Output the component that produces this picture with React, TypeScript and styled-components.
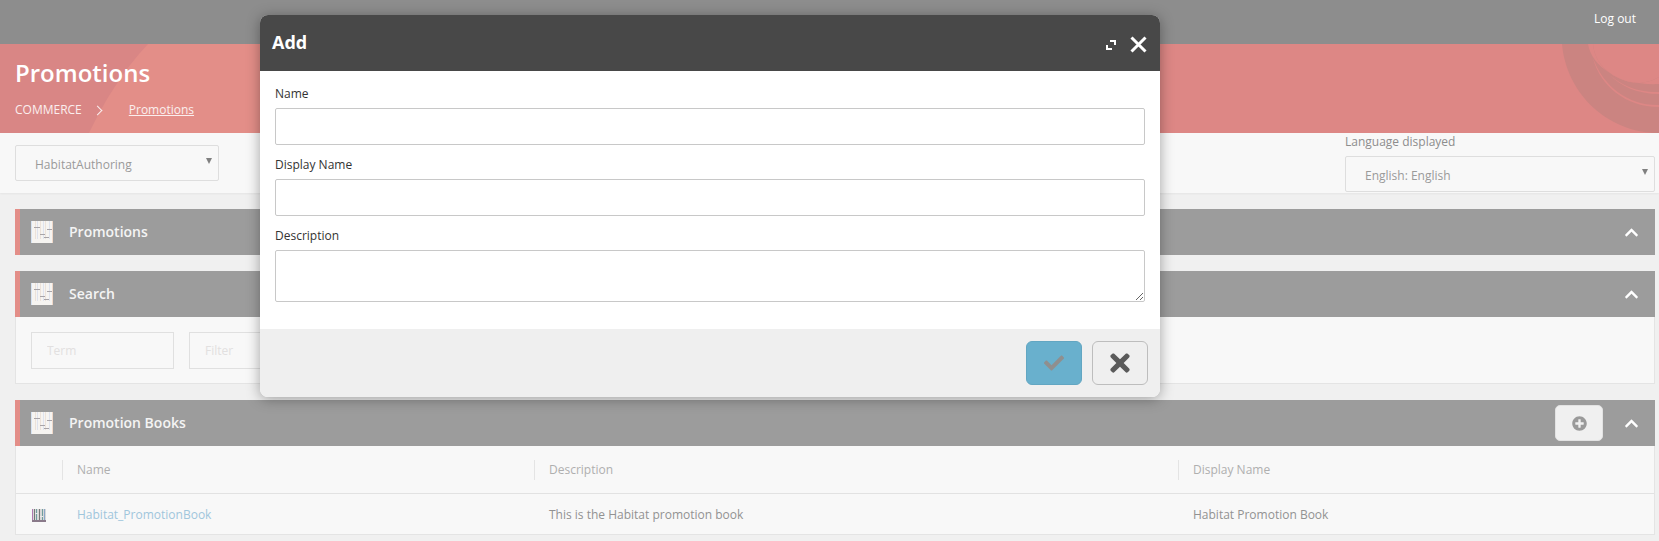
import React from "react";
import styled, { createGlobalStyle } from "styled-components";
import { FaCheck, FaTimes, FaPlusCircle, FaChevronUp } from "react-icons/fa";

const GlobalStyle = createGlobalStyle`
    html, body {
        margin: 0;
        height: 100%;
        overflow: hidden;
        background: #f0f0f0;
        font-family: "Open Sans", "Liberation Sans", sans-serif;
    }
    * {
        box-sizing: border-box;
    }
`;

const MazeIcon = () => (
    <svg width="22" height="22" viewBox="0 0 22 22">
        <rect width="22" height="22" fill="#f6f4f1" />
        <path d="M.5 0v22" stroke="#d5e2f2" />
        <path d="M4.5 0v18M9.5 0v18M14.5 0v18" stroke="#ece2da" />
        <path d="M6.5 0v18M12.5 0v18M18.5 0v18" stroke="#dfe3ee" />
        <path d="M21.5 0v22" stroke="#f0d8c8" />
        <path d="M3 6.5h6M9 13.5h5M13 16.5h5M16 8.5h5" stroke="#a8a4a8" />
    </svg>
);

const SmallMazeIcon = () => (
    <svg width="14" height="13" viewBox="0 0 14 13">
        <rect width="14" height="13" fill="#d8d8d8" />
        <path d="M.5 0v13" stroke="#b07ab0" />
        <path d="M2.5 0v11M7.5 0v11" stroke="#777" />
        <path d="M4.5 0v11M10.5 0v11" stroke="#6f9d9d" />
        <path d="M12.5 0v11" stroke="#8aa6c8" />
        <path d="M0 12h14" stroke="#8a7a8a" strokeWidth="2" />
        <path d="M3 4.5h3M8 7.5h3" stroke="#e8e8e8" />
    </svg>
);

const ExpandIcon = () => (
    <svg width="10" height="10" viewBox="0 0 10 10" fill="none" stroke="#fff" strokeWidth="2">
        <path d="M4 1h5v4M1 5v4h5" />
    </svg>
);

const CloseIcon = () => (
    <svg width="17" height="17" viewBox="0 0 17 17" fill="none" stroke="#fff" strokeWidth="3">
        <path d="M1.5 1.5l14 14M15.5 1.5l-14 14" />
    </svg>
);

const App = () => {
    return (
        <Page>
            <GlobalStyle />
            <TopBar>
                <LogOut>Log out</LogOut>
            </TopBar>
            <Banner>
                <BannerArt width="1659" height="89" viewBox="0 0 1659 89">
                    <path d="M0 0H148C122 28 104 58 89 89H0Z" fill="#d98685" />
                    <path d="M1160 0H1659V89H1160Z" fill="#dd8785" />
                    <path d="M1562 0C1566 48 1606 89 1659 89V0Z" fill="#cb8481" />
                    <path d="M1588 0C1592 24 1622 42 1659 40V33C1652 37 1646 38 1640 39C1630 39 1618 35 1610 29C1600 22 1594 12 1593 0Z" fill="#dd8785" />
                    <path d="M1593 0C1594 12 1600 22 1610 29C1618 35 1630 39 1640 39C1646 38 1652 37 1659 33V0Z" fill="#dd8785" />
                    <path d="M1593 14C1604 44 1630 62 1659 61V63C1626 63 1600 42 1593 14Z" fill="#dd8785" />
                    <path d="M1610 31C1622 42 1640 49 1659 48V50C1638 50 1620 42 1610 31Z" fill="#dd8785" />
                </BannerArt>
                <Title>Promotions</Title>
                <Crumbs>
                    <span>COMMERCE</span>
                    <CrumbArrow />
                    <CrumbLink>Promotions</CrumbLink>
                </Crumbs>
            </Banner>
            <Toolbar>
                <FakeSelect $width={204}>HabitatAuthoring</FakeSelect>
                <LanguageBlock>
                    <LanguageLabel>Language displayed</LanguageLabel>
                    <FakeSelect $width={310}>English: English</FakeSelect>
                </LanguageBlock>
            </Toolbar>
            <Main>
                <section>
                    <PanelHeader>
                        <MazeIcon />
                        <PanelTitle>Promotions</PanelTitle>
                        <Collapse>
                            <FaChevronUp />
                        </Collapse>
                    </PanelHeader>
                </section>
                <section>
                    <PanelHeader>
                        <MazeIcon />
                        <PanelTitle>Search</PanelTitle>
                        <Collapse>
                            <FaChevronUp />
                        </Collapse>
                    </PanelHeader>
                    <SearchBody>
                        <SearchInput placeholder="Term" />
                        <SearchInput placeholder="Filter" />
                    </SearchBody>
                </section>
                <section>
                    <PanelHeader>
                        <MazeIcon />
                        <PanelTitle>Promotion Books</PanelTitle>
                        <AddButton>
                            <FaPlusCircle />
                        </AddButton>
                        <Collapse>
                            <FaChevronUp />
                        </Collapse>
                    </PanelHeader>
                    <TableBody>
                        <HeadRow>
                            <div />
                            <HeadCell>Name</HeadCell>
                            <HeadCell>Description</HeadCell>
                            <HeadCell>Display Name</HeadCell>
                        </HeadRow>
                        <DataRow>
                            <IconCell>
                                <SmallMazeIcon />
                            </IconCell>
                            <BookLink>Habitat_PromotionBook</BookLink>
                            <DataCell>This is the Habitat promotion book</DataCell>
                            <DataCell>Habitat Promotion Book</DataCell>
                        </DataRow>
                    </TableBody>
                </section>
            </Main>
            <Modal>
                <ModalHeader>
                    <ModalTitle>Add</ModalTitle>
                    <ExpandIcon />
                    <CloseIcon />
                </ModalHeader>
                <ModalBody>
                    <FieldLabel>Name</FieldLabel>
                    <TextInput />
                    <FieldLabel>Display Name</FieldLabel>
                    <TextInput />
                    <FieldLabel>Description</FieldLabel>
                    <TextArea />
                </ModalBody>
                <ModalFooter>
                    <ConfirmButton>
                        <FaCheck />
                    </ConfirmButton>
                    <CancelButton>
                        <FaTimes />
                    </CancelButton>
                </ModalFooter>
            </Modal>
        </Page>
    );
};

export default App;

const Page = styled.div`
    position: relative;
    height: 541px;
    overflow: hidden;
`;

const TopBar = styled.header`
    height: 44px;
    background: #8d8d8d;
    display: flex;
    justify-content: flex-end;
    align-items: flex-start;
    padding: 10px 23px 0 0;
`;

const LogOut = styled.a`
    color: #fff;
    font-size: 12px;
    line-height: 18px;
`;

const Banner = styled.div`
    position: relative;
    height: 89px;
    background: #e38e88;
    color: #fff;
    padding: 13px 15px 0;
`;

const BannerArt = styled.svg`
    position: absolute;
    left: 0;
    top: 0;
`;

const Title = styled.h1`
    position: relative;
    margin: 0;
    font-size: 24px;
    font-weight: 600;
    line-height: 32px;
`;

const Crumbs = styled.div`
    position: relative;
    margin-top: 12px;
    display: flex;
    align-items: center;
    font-size: 12px;
    line-height: 18px;
    color: #fbeeee;
`;

const CrumbArrow = styled.i`
    width: 7px;
    height: 7px;
    margin: 0 28px 0 12px;
    border-top: 1px solid #fbeeee;
    border-right: 1px solid #fbeeee;
    transform: rotate(45deg);
`;

const CrumbLink = styled.a`
    text-decoration: underline;
`;

const Toolbar = styled.div`
    height: 60px;
    background: #f8f8f8;
    box-shadow: 0 1px 2px rgba(0, 0, 0, 0.05);
    display: flex;
    justify-content: space-between;
    padding: 12px 4px 0 15px;
`;

const FakeSelect = styled.div<{ $width: number }>`
    position: relative;
    width: ${({ $width }) => $width}px;
    height: 36px;
    border: 1px solid #dedede;
    border-radius: 2px;
    padding: 0 0 0 19px;
    font-size: 12px;
    line-height: 38px;
    color: #9a9a9a;
    &::after {
        content: "";
        position: absolute;
        right: 6px;
        top: 12px;
        border-left: 3px solid transparent;
        border-right: 3px solid transparent;
        border-top: 6px solid #808080;
    }
`;

const LanguageBlock = styled.div`
    margin-top: -12px;
`;

const LanguageLabel = styled.div`
    font-size: 12px;
    line-height: 18px;
    height: 23px;
    color: #8d8d8d;
`;

const Main = styled.main`
    display: flex;
    flex-direction: column;
    gap: 16px;
    padding: 16px 4px 0 15px;
`;

const PanelHeader = styled.div`
    height: 46px;
    display: flex;
    align-items: center;
    background: #9c9c9c;
    border-left: 5px solid #e38e88;
    padding-left: 11px;
    color: #fff;
`;

const PanelTitle = styled.h2`
    flex: 1;
    margin: 0 0 1px 16px;
    font-size: 14px;
    font-weight: 600;
    color: #f4f4f4;
`;

const Collapse = styled.span`
    width: 52px;
    display: flex;
    justify-content: center;
    padding-left: 4px;
    font-size: 15px;
`;

const AddButton = styled.button`
    width: 48px;
    height: 36px;
    display: flex;
    align-items: center;
    justify-content: center;
    border: 1px solid #e2e2e2;
    border-radius: 5px;
    background: #f0f0f0;
    color: #9a9a9a;
    font-size: 15px;
`;

const SearchBody = styled.div`
    height: 67px;
    display: flex;
    gap: 15px;
    padding: 15px 15px 0;
    background: #f8f8f8;
    border: 1px solid #e4e4e4;
    border-top: none;
`;

const SearchInput = styled.input`
    width: 143px;
    height: 37px;
    border: 1px solid #e0e0e0;
    background: transparent;
    padding: 0 15px;
    font-family: inherit;
    font-size: 12px;
    &::placeholder {
        color: #e2e0e0;
    }
`;

const TableBody = styled.div`
    background: #f8f8f8;
    border: 1px solid #e4e4e4;
    border-top: none;
`;

const HeadRow = styled.div`
    height: 48px;
    display: grid;
    grid-template-columns: 46px 472px 644px 1fr;
    align-items: center;
    border-bottom: 1px solid #e2e2e2;
`;

const HeadCell = styled.div`
    height: 20px;
    border-left: 1px solid #e4e4e4;
    padding-left: 14px;
    font-size: 12px;
    line-height: 20px;
    color: #afafaf;
`;

const DataRow = styled.div`
    height: 40px;
    display: grid;
    grid-template-columns: 46px 472px 644px 1fr;
    align-items: center;
`;

const IconCell = styled.div`
    padding: 2px 0 0 16px;
    line-height: 0;
`;

const DataCell = styled.div`
    padding-left: 15px;
    font-size: 12px;
    color: #929292;
`;

const BookLink = styled(DataCell)`
    color: #a0c6dc;
`;

const Modal = styled.div`
    position: absolute;
    left: 260px;
    top: 15px;
    width: 900px;
    border-radius: 8px;
    overflow: hidden;
    background: #fff;
    box-shadow: 0 2px 14px rgba(0, 0, 0, 0.35);
`;

const ModalHeader = styled.div`
    height: 56px;
    background: #484848;
    display: flex;
    align-items: center;
    padding: 3px 13px 0 12px;
    gap: 14px;
`;

const ModalTitle = styled.h3`
    flex: 1;
    margin: 0 0 5px;
    font-size: 18px;
    font-weight: 700;
    color: #fff;
`;

const ModalBody = styled.div`
    height: 258px;
    padding: 15px 15px 0;
    display: flex;
    flex-direction: column;
`;

const FieldLabel = styled.label`
    font-size: 12px;
    line-height: 16px;
    margin-bottom: 6px;
    color: #333;
`;

const TextInput = styled.input`
    flex: none;
    height: 37px;
    border: 1px solid #c8c8c8;
    border-radius: 2px;
    margin-bottom: 12px;
`;

const TextArea = styled.textarea`
    flex: none;
    height: 52px;
    border: 1px solid #c8c8c8;
    border-radius: 2px;
`;

const ModalFooter = styled.div`
    height: 68px;
    background: #efefef;
    display: flex;
    justify-content: flex-end;
    gap: 10px;
    padding: 12px 12px 0 0;
`;

const ConfirmButton = styled.button`
    width: 56px;
    height: 44px;
    display: flex;
    align-items: center;
    justify-content: center;
    background: #69b0cd;
    border: 1px solid #62a6c2;
    border-radius: 6px;
    color: #8f8f8f;
    font-size: 20px;
`;

const CancelButton = styled(ConfirmButton)`
    background: #efefef;
    border-color: #bdbdbd;
    color: #5a5a5a;
    font-size: 28px;
`;
